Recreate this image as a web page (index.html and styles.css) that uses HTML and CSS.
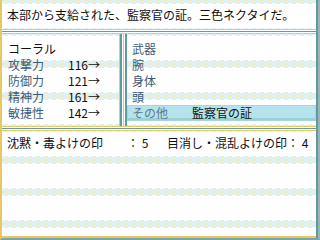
FILE: index.html
```html
<!DOCTYPE html>
<html lang="ja">
<head>
    <meta charset="UTF-8">
    <title>装備</title>
    <link rel="stylesheet" href="styles.css">
</head>
<body>
    <div class="screen">
        <div class="win msg">本部から支給された、監察官の証。三色ネクタイだ。</div>
        <div class="hsep"></div>
        <div class="mid">
            <div class="win stats">
                <div class="row name">コーラル</div>
                <div class="row"><span class="lbl">攻撃力</span><span class="val">116→</span></div>
                <div class="row"><span class="lbl">防御力</span><span class="val">121→</span></div>
                <div class="row"><span class="lbl">精神力</span><span class="val">161→</span></div>
                <div class="row"><span class="lbl">敏捷性</span><span class="val">142→</span></div>
            </div>
            <div class="vsep"></div>
            <div class="win equip">
                <div class="row"><span class="lbl">武器</span></div>
                <div class="row"><span class="lbl">腕</span></div>
                <div class="row"><span class="lbl">身体</span></div>
                <div class="row"><span class="lbl">頭</span></div>
                <div class="row sel"><span class="lbl">その他</span><span class="val">監察官の証</span></div>
            </div>
        </div>
        <div class="hsep"></div>
        <div class="win info">
            <div class="cell">沈黙・毒よけの印　　： 5</div>
            <div class="cell">目消し・混乱よけの印： 4</div>
        </div>
    </div>
</body>
</html>
```

FILE: styles.css
```css
* {
    box-sizing: border-box;
}

body {
    margin: 0;
    font-family: "Noto Sans CJK JP", "DejaVu Sans", sans-serif;
    font-size: 12px;
    color: #101010;
}

.screen {
    width: 320px;
    height: 240px;
    display: flex;
    flex-direction: column;
    overflow: hidden;
    border-left: 2px solid #e8c860;
    border-right: 2px solid #9ab4b4;
    box-shadow: inset -2px 0 #5f9aa0, inset 0 -2px #e8c860;
    border-bottom: 2px solid #7fa4a8;
    /* lace bands every 32px */
    background-color: #fff;
    background-image:
        radial-gradient(circle at 4px 5px, #f8ecb8 1.6px, transparent 2.1px),
        radial-gradient(circle at 4px 5px, #dcf1f7 4px, transparent 4.5px),
        linear-gradient(to bottom, #dcf1f7 0, #dcf1f7 3px, transparent 3px, transparent 29px, #dcf1f7 29px);
    background-size: 8px 32px, 8px 32px, 8px 32px;
    background-position: 0 -5px, 0 -5px, 0 0;
}

.msg {
    height: 29px;
    line-height: 28px;
    padding: 1px 0 0 5px;
    white-space: nowrap;
}

.hsep {
    height: 5px;
    flex: none;
    margin-right: 2px;
    background: linear-gradient(to bottom,
        #e8c860 0 1px, #fff 1px 2px, #5f9aa0 2px 3px, #fff 3px 4px, #e8c860 4px 5px);
}

.mid {
    height: 92px;
    display: flex;
}

.stats {
    width: 117px;
    padding: 7px 0 0 6px;
}

.vsep {
    width: 8px;
    background: linear-gradient(to right,
        #e8c860 0 1px, #5f9aa0 1px 3px, #fff 3px 4px, #e8c860 4px 5px,
        #fff 5px 6px, #5f9aa0 6px 8px);
}

.equip {
    flex: 1;
    padding-top: 7px;
    margin-right: 2px;
}

.row {
    height: 16px;
    line-height: 16px;
    display: flex;
    white-space: nowrap;
}

.lbl {
    width: 60px;
    color: #3c5a78;
}

.name {
    color: #101010;
}

.equip .row {
    padding-left: 5px;
}

.sel {
    background: #b6e3eb;
    border: 1px solid #a4d8e0;
    box-shadow: inset 0 -2px #98d0d8;
    line-height: 14px;
    padding-left: 4px !important;
}

.sel .lbl {
    color: #5a7890;
}

.info {
    flex: 1;
    display: grid;
    grid-template-columns: 160px 1fr;
    align-content: start;
    padding: 4px 0 0 5px;
    line-height: 16px;
}

.cell {
    white-space: nowrap;
}
```
